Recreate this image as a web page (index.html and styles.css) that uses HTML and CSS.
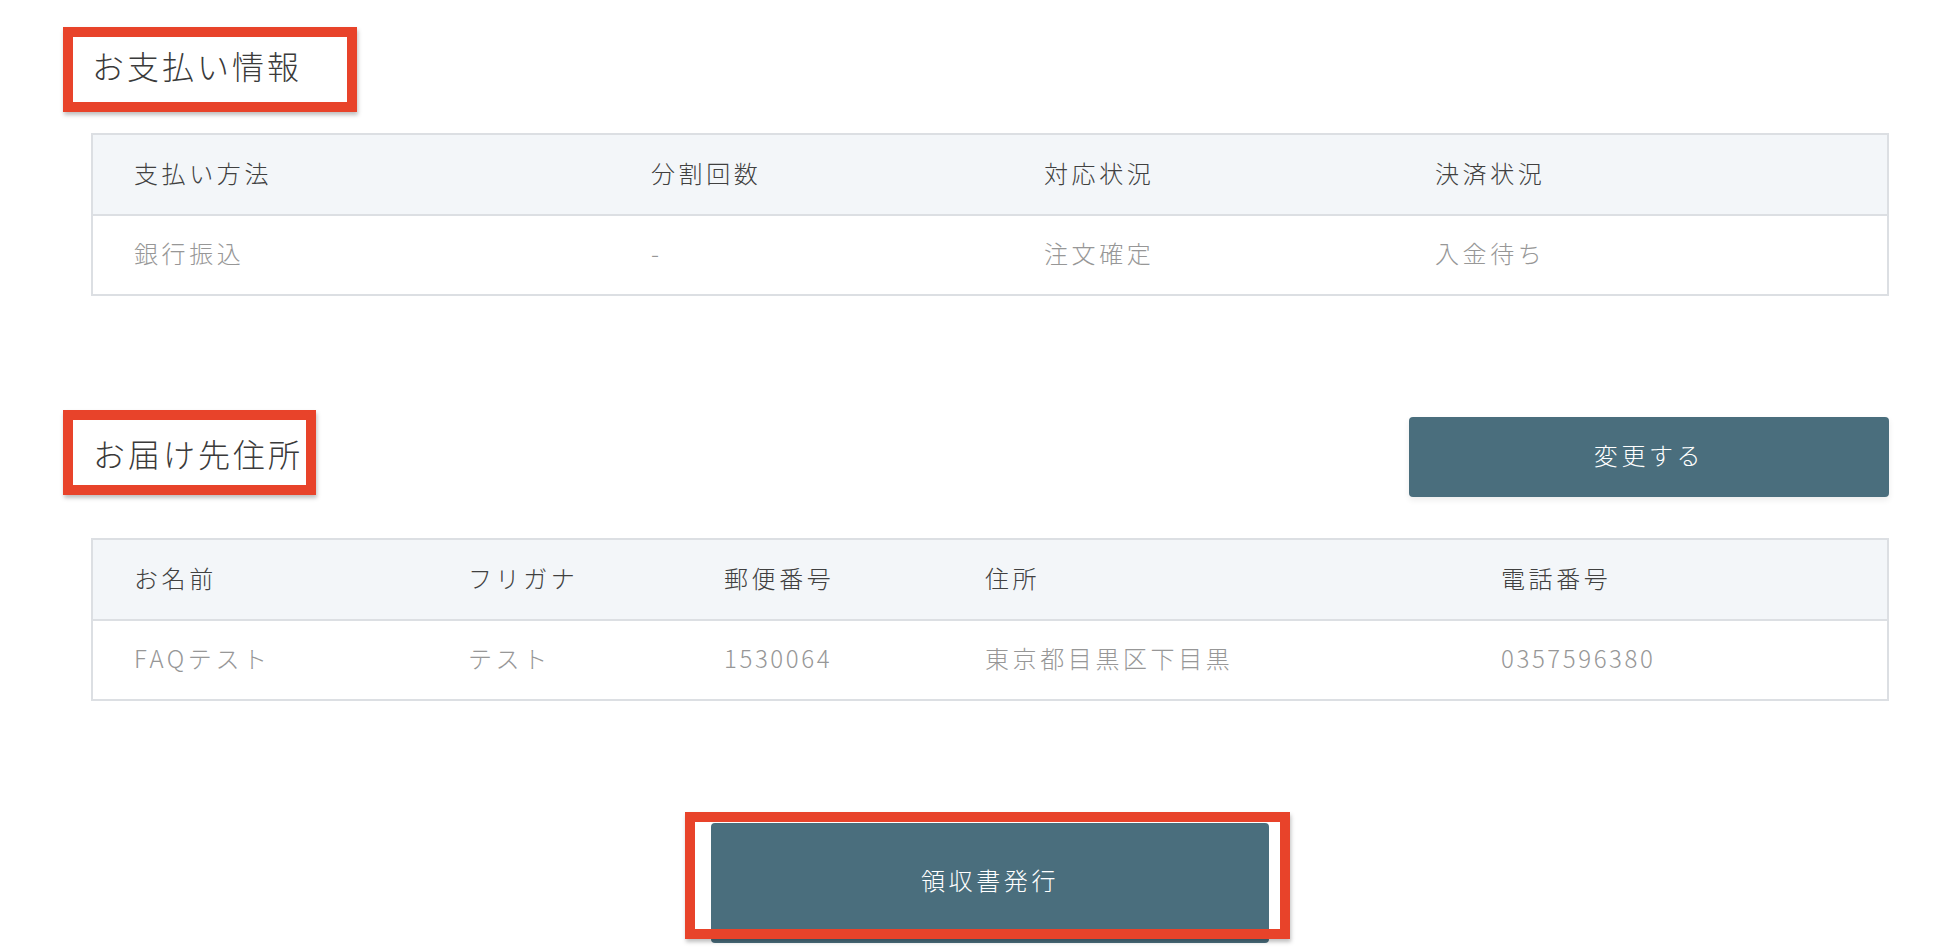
FILE: index.html
```html
<!DOCTYPE html>
<html lang="ja">

<head>
    <meta charset="utf-8">
    <meta name="viewport" content="width=device-width, initial-scale=1">
    <title>ご注文詳細</title>
    <link rel="stylesheet" href="styles.css">
</head>

<body>
    <main class="page">
        <!-- お支払い情報 -->
        <section class="section">
            <h2 class="heading heading--payment">お支払い情報</h2>
            <div class="info-table info-table--payment">
                <div class="info-table__row info-table__row--head">
                    <div class="info-table__cell">支払い方法</div>
                    <div class="info-table__cell">分割回数</div>
                    <div class="info-table__cell">対応状況</div>
                    <div class="info-table__cell">決済状況</div>
                </div>
                <div class="info-table__row">
                    <div class="info-table__cell">銀行振込</div>
                    <div class="info-table__cell">-</div>
                    <div class="info-table__cell">注文確定</div>
                    <div class="info-table__cell">入金待ち</div>
                </div>
            </div>
        </section>

        <!-- お届け先住所 -->
        <section class="section section--address">
            <div class="section__header">
                <h2 class="heading heading--address">お届け先住所</h2>
                <button class="btn btn--change" type="button">変更する</button>
            </div>
            <div class="info-table info-table--address">
                <div class="info-table__row info-table__row--head">
                    <div class="info-table__cell">お名前</div>
                    <div class="info-table__cell">フリガナ</div>
                    <div class="info-table__cell">郵便番号</div>
                    <div class="info-table__cell">住所</div>
                    <div class="info-table__cell">電話番号</div>
                </div>
                <div class="info-table__row">
                    <div class="info-table__cell">FAQテスト</div>
                    <div class="info-table__cell">テスト</div>
                    <div class="info-table__cell info-table__cell--num">1530064</div>
                    <div class="info-table__cell">東京都目黒区下目黒</div>
                    <div class="info-table__cell info-table__cell--num">0357596380</div>
                </div>
            </div>
        </section>

        <!-- 領収書 -->
        <div class="receipt">
            <div class="receipt__wrap">
                <button class="btn btn--receipt" type="button">領収書発行</button>
                <span class="receipt__mark"></span>
            </div>
        </div>
    </main>
</body>

</html>
```

FILE: styles.css
```css
* {
    margin: 0;
    padding: 0;
    box-sizing: border-box;
}

html,
body {
    height: 100%;
    overflow: hidden;
    background: #fff;
    font-family: "Noto Sans CJK JP", "Noto Sans", sans-serif;
    font-weight: 300;
    color: #4a4a4a;
}

.page {
    padding: 27px 51px 0 63px;
}

/* Section headings (with red annotation frame) */
.heading {
    display: inline-block;
    height: 85px;
    border: 10px solid #e8432a;
    box-shadow: 1px 3px 4px rgba(0, 0, 0, 0.25);
    font-size: 32px;
    font-weight: 300;
    line-height: 57px;
    letter-spacing: 3px;
    color: #3a3a3a;
    white-space: nowrap;
}

.heading--payment {
    width: 294px;
    padding-left: 19px;
}

.heading--address {
    width: 253px;
    padding-left: 20px;
    line-height: 67px;
}

/* Tables */
.info-table {
    margin: 21px 0 0 28px;
    border: 2px solid #dcdfe3;
}

.info-table__row {
    display: grid;
    align-items: center;
    height: 78px;
    padding-bottom: 5px;
    font-size: 24px;
    letter-spacing: 3.6px;
    color: #979797;
}

.info-table__row--head {
    height: 81px;
    padding-bottom: 4px;
    background: #f3f6f9;
    border-bottom: 2px solid #dcdfe3;
    color: #404040;
}

.info-table--payment .info-table__row {
    grid-template-columns: 517px 393px 391px 1fr;
}

.info-table--address .info-table__row {
    grid-template-columns: 334px 256px 261px 516px 1fr;
}

.info-table__cell {
    padding-left: 41px;
    white-space: nowrap;
}

.info-table__cell--num {
    letter-spacing: 2.6px;
}

/* Address section */
.section--address {
    margin-top: 114px;
}

.section__header {
    display: flex;
    justify-content: space-between;
    align-items: flex-start;
}

.section--address .info-table {
    margin-top: 41px;
}

/* Buttons */
.btn {
    border: none;
    border-radius: 4px;
    background: #4a6e7d;
    color: #fff;
    font-family: inherit;
    font-size: 24px;
    font-weight: 300;
    letter-spacing: 3.6px;
    cursor: pointer;
}

.btn--change {
    width: 480px;
    height: 80px;
    margin-top: 7px;
    padding-bottom: 5px;
    box-shadow: 0 3px 6px rgba(0, 0, 0, 0.08);
}

/* Receipt button */
.receipt {
    display: flex;
    justify-content: center;
    margin: 122px 0 0 28px;
}

.receipt__wrap {
    position: relative;
}

.btn--receipt {
    display: block;
    width: 558px;
    height: 120px;
    padding-bottom: 8px;
}

.receipt__mark {
    position: absolute;
    left: -26px;
    top: -11px;
    width: 605px;
    height: 127px;
    border: 10px solid #e8432a;
    box-shadow: 1px 3px 4px rgba(0, 0, 0, 0.25);
    pointer-events: none;
}
```
